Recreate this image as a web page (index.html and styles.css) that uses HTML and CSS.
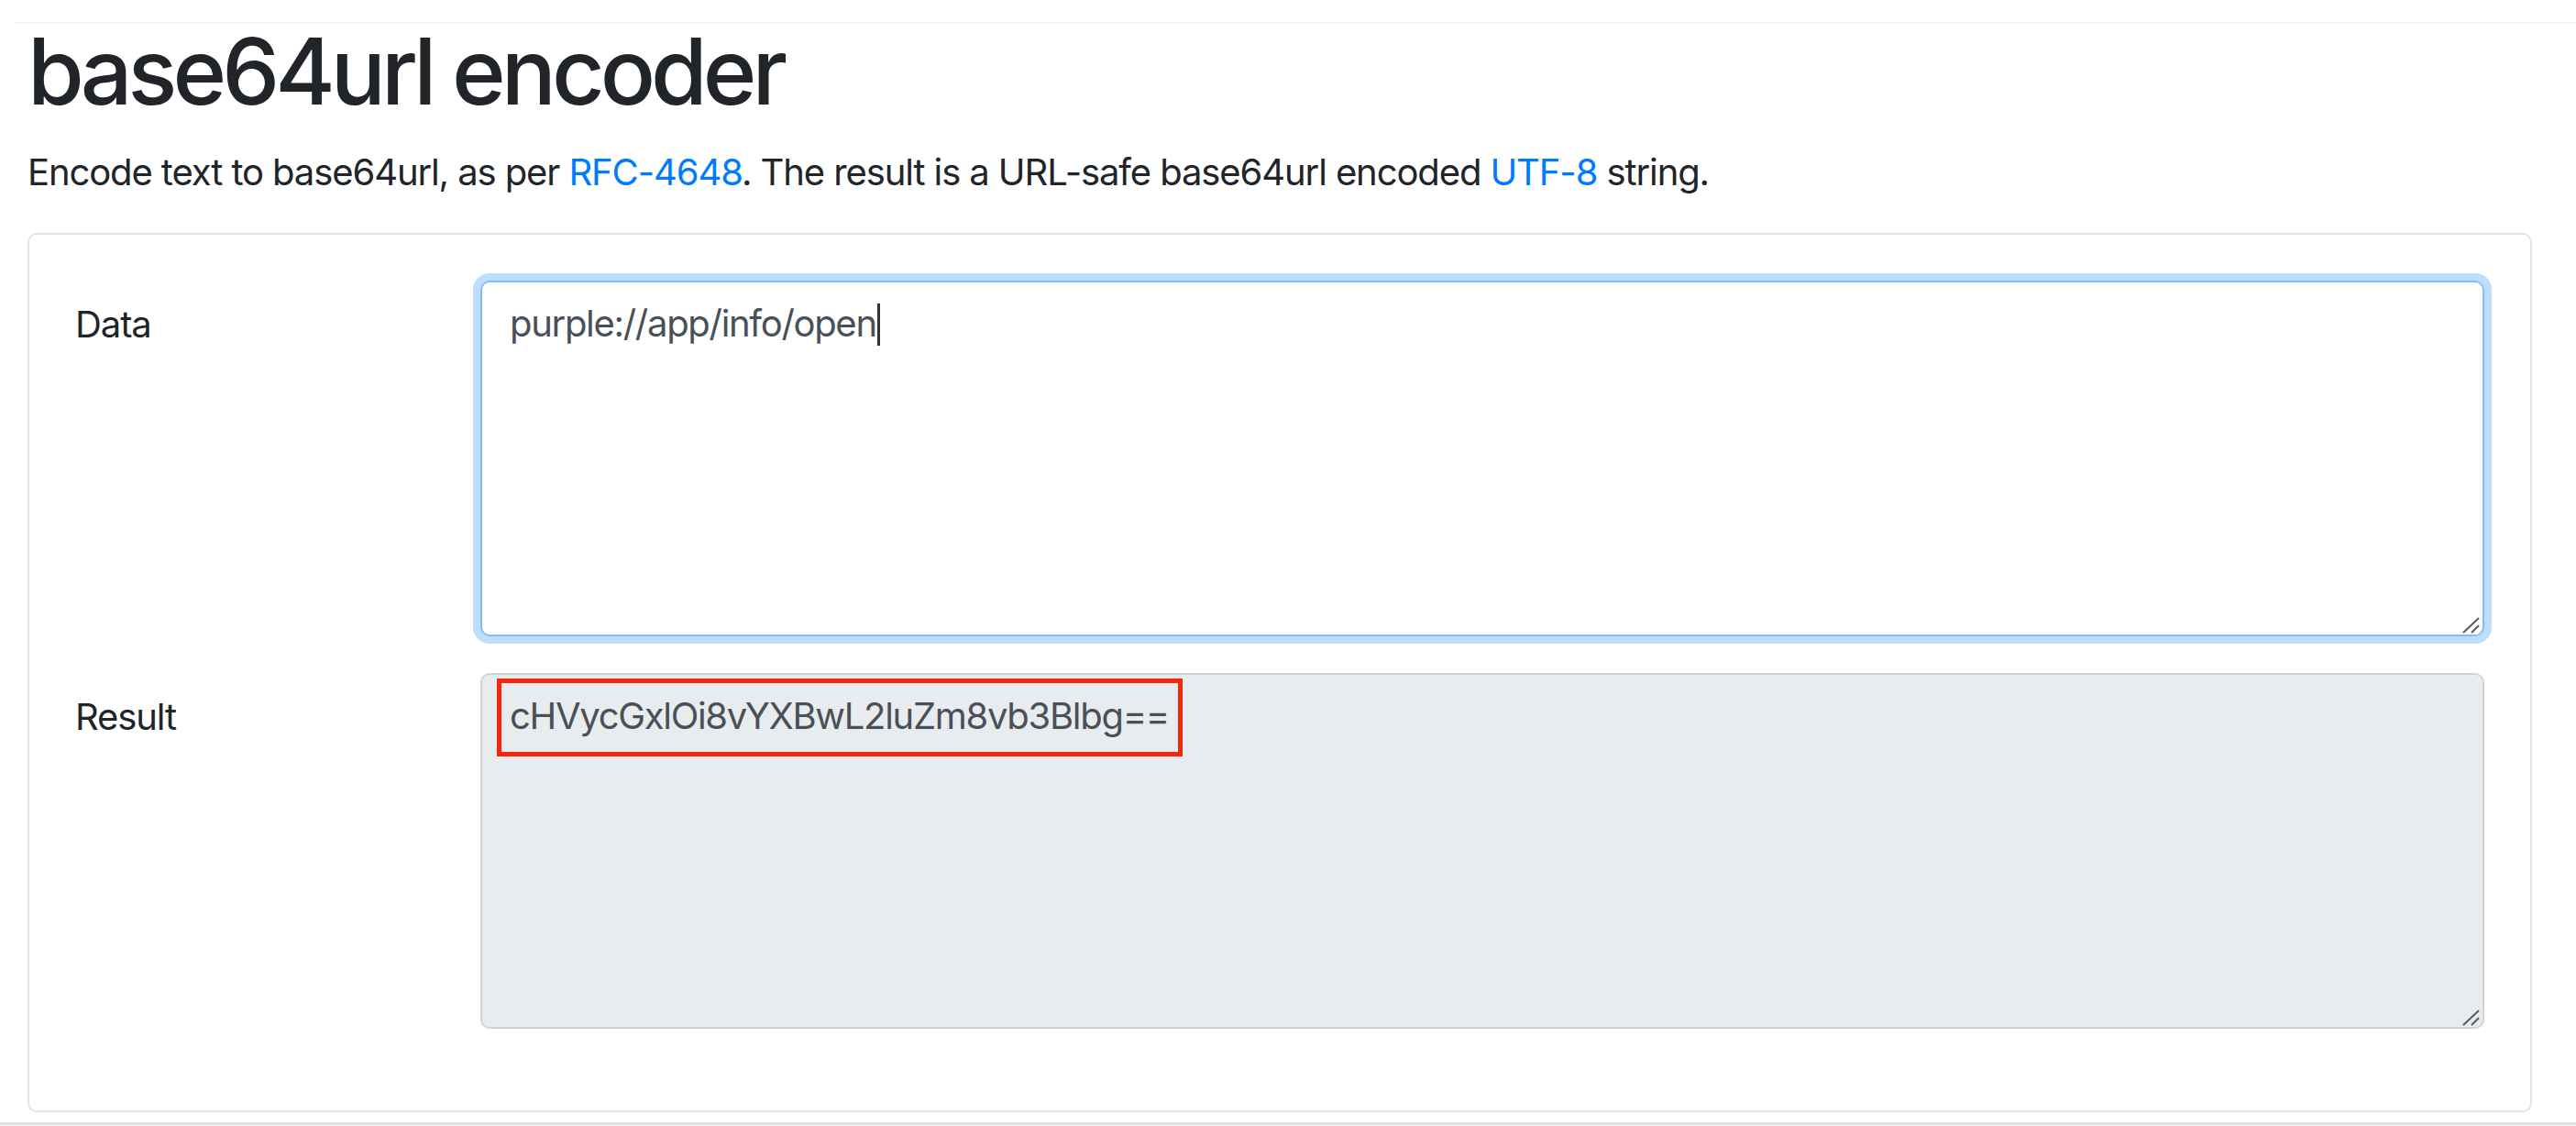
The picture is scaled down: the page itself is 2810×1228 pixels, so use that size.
FILE: index.html
```html
<!DOCTYPE html>
<html lang="en">
<head>
<meta charset="utf-8">
<title>base64url encoder</title>
<link rel="stylesheet" href="styles.css">
</head>
<body>
<div class="topline"></div>
<main class="page">
  <h1 class="title">base64url encoder</h1>
  <p class="lead">Encode text to base64url, as per <a href="#">RFC-4648</a>. The result is a URL-safe base64url encoded <a href="#">UTF-8</a> string.</p>
  <section class="card">
    <div class="form-row">
      <label class="form-label">Data</label>
      <div class="field field-focus">
        <span class="field-text">purple://app/info/open</span><span class="caret"></span>
        <svg class="grip" width="22" height="20" viewBox="0 0 22 20"><path d="M3 19 L20 3 M12 19 L20 11" stroke="#5a5a5a" stroke-width="2" fill="none"/></svg>
      </div>
    </div>
    <div class="form-row">
      <label class="form-label">Result</label>
      <div class="field field-readonly">
        <span class="field-text">cHVycGxlOi8vYXBwL2luZm8vb3Blbg==</span>
        <span class="annotation"></span>
        <svg class="grip" width="22" height="20" viewBox="0 0 22 20"><path d="M3 19 L20 3 M12 19 L20 11" stroke="#5a5a5a" stroke-width="2" fill="none"/></svg>
      </div>
    </div>
  </section>
  <div class="bottom-strip"></div>
</main>
</body>
</html>
```

FILE: styles.css
```css
* { box-sizing: border-box; }
html, body { margin: 0; padding: 0; background: #fff; }
body {
  font-family: "Inter", "Liberation Sans", sans-serif;
  color: #212529;
  font-size: 40px;
  line-height: 60px;
  letter-spacing: -1.1px;
  width: 2810px;
  height: 1228px;
  overflow: hidden;
}
.topline {
  margin: 24px 0 0 15px;
  border-top: 2px solid #f5f5f5;
}
.page {
  padding: 0 48px 0 30px;
}
.title {
  margin: -8px 0 20px 0;
  font-size: 100px;
  line-height: 120px;
  font-weight: 500;
  letter-spacing: -5px;
}
.lead {
  margin: 0 0 36px 0;
}
.lead a { color: #007bff; text-decoration: none; }
.card {
  border: 2px solid #e3e3e3;
  border-radius: 10px;
  padding: 50px 50px 89px 50px;
  display: flex;
  flex-direction: column;
  gap: 40px;
  margin-bottom: 11px;
}
.form-row {
  display: grid;
  grid-template-columns: 367px 1fr;
  column-gap: 75px;
}
.form-label {
  padding-top: 18px;
  line-height: 60px;
}
.field {
  position: relative;
  height: 388px;
  border: 2.5px solid #ced4da;
  border-radius: 10px;
  padding: 15px 30px;
  color: #495057;
}
.field-text { letter-spacing: -1.3px; }
.field-focus {
  border-color: #80bdff;
  box-shadow: 0 0 0 8px rgba(0, 123, 255, 0.25);
}
.field-readonly {
  background: #e9ecef;
}
.caret {
  display: inline-block;
  width: 3px;
  height: 46px;
  background: #333;
  vertical-align: -10px;
  margin-left: 1px;
}
.grip {
  position: absolute;
  right: 2px;
  bottom: 1px;
}
.annotation {
  position: absolute;
  left: 16px;
  top: 4px;
  width: 748px;
  height: 85px;
  border: 5px solid #f4260c;
}
.bottom-strip {
  height: 3px;
  background: #dedede;
  margin: 0 -48px 0 -30px;
}
```
